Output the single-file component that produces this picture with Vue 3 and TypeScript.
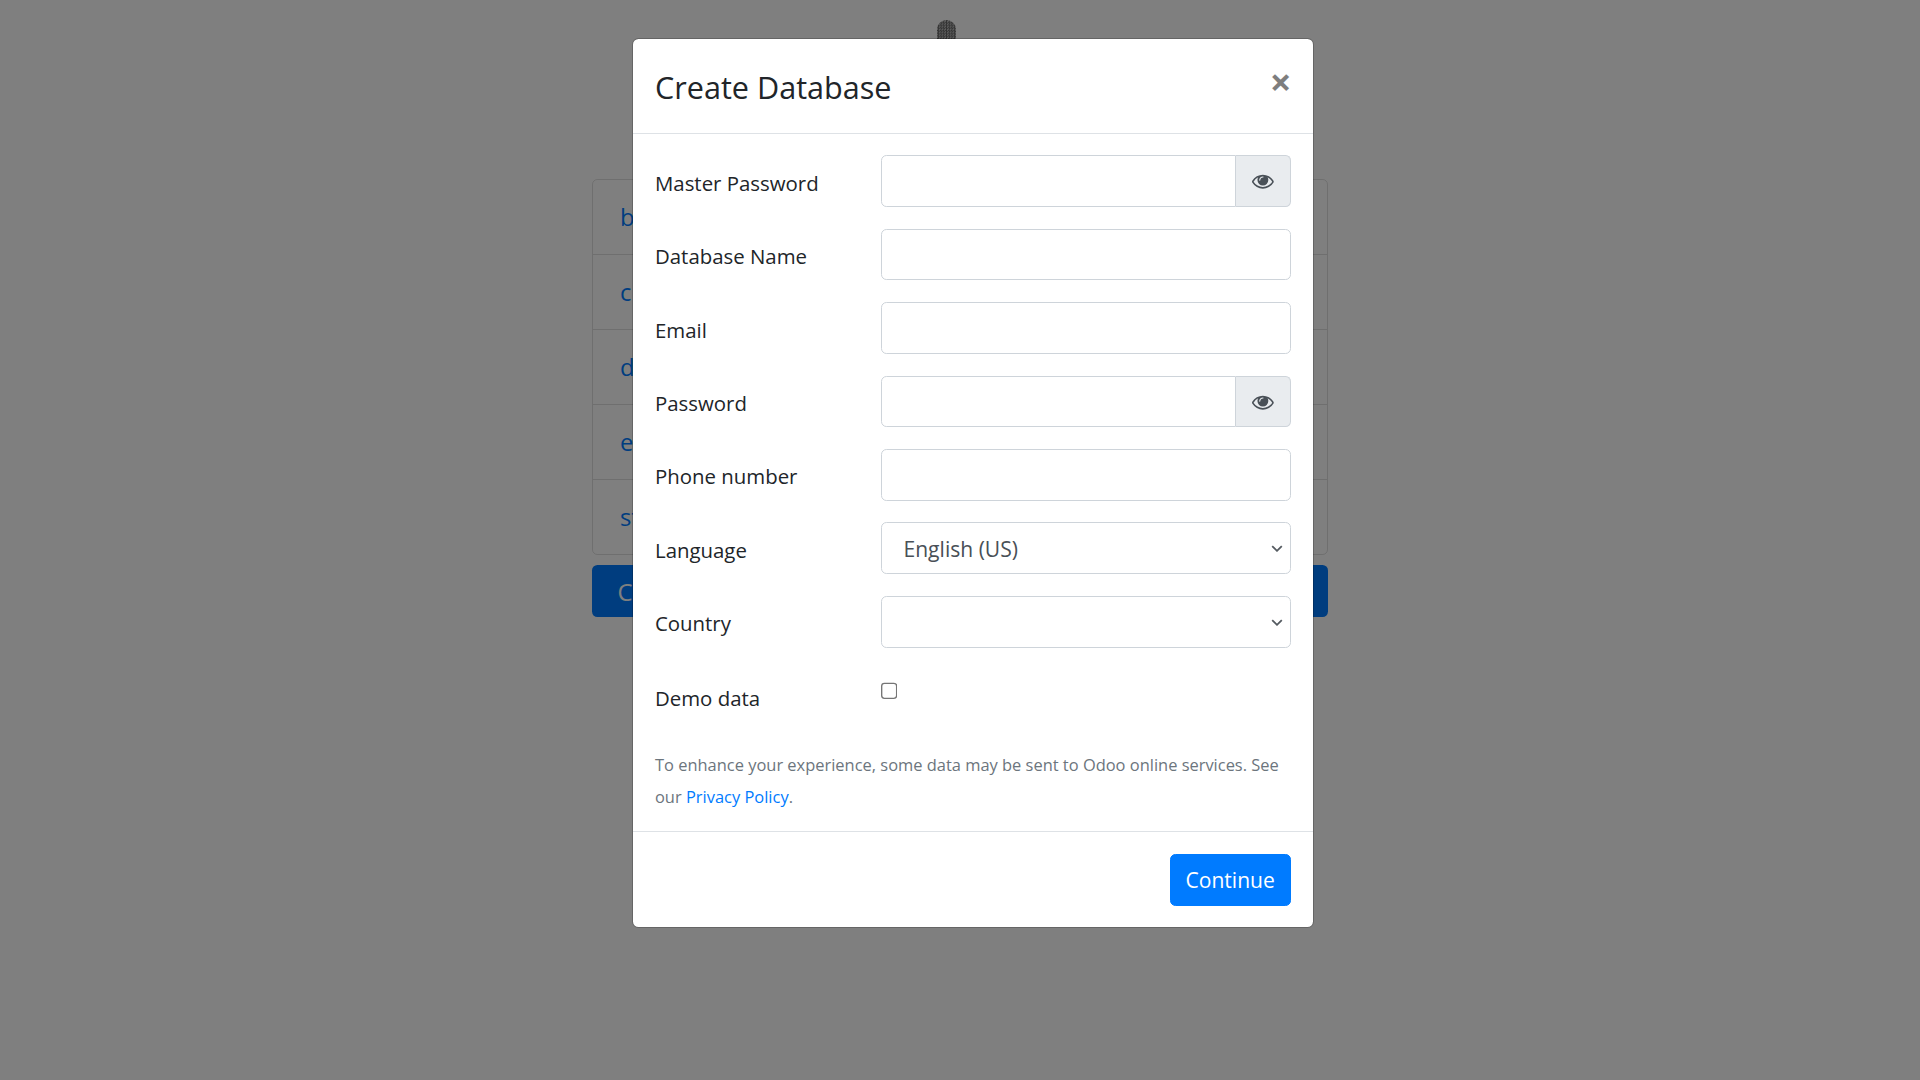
<script setup lang="ts">
const rows: string[] = ['bkp_one', 'crm_demo', 'dev_main', 'erp_test', 'staging'];
const languages: string[] = ['English (US)'];
const eye =
  'M1664 960q-152-236-381-353 61 97 61 225 0 185-131.5 316.5t-316.5 131.5-316.5-131.5-131.5-316.5q0-121 61-225-229 117-381 353 133 205 333.5 326.5t434.5 121.5 434.5-121.5 333.5-326.5zm-720-384q0-20-14-34t-34-14q-125 0-214.5 89.5t-89.5 214.5q0 20 14 34t34 14 34-14 14-34q0-86 61-147t147-61q20 0 34-14t14-34zm848 384q0 34-20 69-140 230-376.5 368.5t-499.5 138.5-499.5-139-376.5-368q-20-35-20-69t20-69q140-229 376.5-368t499.5-139 499.5 139 376.5 368q20 35 20 69z';
</script>

<template>
  <div class="page">
    <div class="behind">
      <div class="logo"></div>
      <ul class="list">
        <li v-for="row in rows" :key="row" class="list-item"><a href="#">{{ row }}</a></li>
      </ul>
      <div class="create-btn">Create Database</div>
    </div>
    <div class="backdrop"></div>
    <div class="modal-wrap">
      <div class="modal">
        <header class="modal-header">
          <h5 class="modal-title">Create Database</h5>
          <button type="button" class="close">×</button>
        </header>
        <div class="modal-body">
          <div class="row">
            <label class="label">Master Password</label>
            <div class="group">
              <input class="control joined" type="password" />
              <span class="addon">
                <svg class="eye" viewBox="0 0 1792 1792"><path :d="eye" fill="currentColor" /></svg>
              </span>
            </div>
          </div>
          <div class="row">
            <label class="label">Database Name</label>
            <input class="control" type="text" />
          </div>
          <div class="row">
            <label class="label">Email</label>
            <input class="control" type="text" />
          </div>
          <div class="row">
            <label class="label">Password</label>
            <div class="group">
              <input class="control joined" type="password" />
              <span class="addon">
                <svg class="eye" viewBox="0 0 1792 1792"><path :d="eye" fill="currentColor" /></svg>
              </span>
            </div>
          </div>
          <div class="row">
            <label class="label">Phone number</label>
            <input class="control" type="text" />
          </div>
          <div class="row">
            <label class="label">Language</label>
            <select class="control select">
              <option v-for="lang in languages" :key="lang">{{ lang }}</option>
            </select>
          </div>
          <div class="row">
            <label class="label">Country</label>
            <select class="control select"><option></option></select>
          </div>
          <div class="row">
            <label class="label demo-label">Demo data</label>
            <div><input class="check" type="checkbox" /></div>
          </div>
          <p class="hint">
            To enhance your experience, some data may be sent to Odoo online services. See our
            <a href="#" class="link">Privacy Policy</a>.
          </p>
        </div>
        <footer class="modal-footer">
          <button type="button" class="continue">Continue</button>
        </footer>
      </div>
    </div>
  </div>
</template>

<style>
html, body { margin: 0; padding: 0; background: #fff; overflow: hidden; }
</style>

<style scoped>
.page {
  zoom: 1.36;
  position: relative;
  height: 794.12px;
  overflow: hidden;
  font-family: "Open Sans", "Noto Sans", sans-serif;
  font-size: 15px;
  line-height: 24px;
  color: #212529;
}
.behind { width: 541.5px; margin: 0 auto; display: flex; flex-direction: column; align-items: stretch; }
.logo {
  align-self: flex-start;
  width: 14px;
  height: 16px;
  margin: 15px 0 0 254px;
  border-radius: 7px 7px 0 0;
  background: repeating-conic-gradient(#666 0 25%, #bbb 0 50%) 0 0 / 2px 2px;
}
.list { list-style: none; margin: 100.5px 0 0; padding: 0; border: 1px solid rgba(0, 0, 0, .125); border-radius: 4px; }
.list-item { padding: 15.5px 20px 8.9px; height: 30px; border-top: 1px solid rgba(0, 0, 0, .125); }
.list-item:first-child { border-top: 0; }
.list-item a { color: #007bff; text-decoration: none; font-size: 17.5px; }
.create-btn { margin-top: 7.5px; height: 38.5px; background: #007bff; color: #fff; border-radius: 4px; padding: 8px 19px; box-sizing: border-box; font-size: 17.5px; }
.backdrop { position: absolute; inset: 0; background: rgba(0, 0, 0, .5); }
.modal-wrap { position: absolute; inset: 0; padding: 28px 0 0 19px; display: flex; justify-content: center; align-items: flex-start; }
.modal { width: 502px; box-sizing: border-box; background: #fff; border: 1px solid rgba(0, 0, 0, .2); border-radius: 4.8px; background-clip: padding-box; }
.modal-header { display: flex; justify-content: space-between; align-items: flex-start; padding: 17.3px 16.5px 15.5px; border-bottom: 1px solid #dee2e6; }
.modal-title { margin: 0; font-size: 22.5px; font-weight: 400; line-height: 36px; }
.close {
  padding: 16.5px 16px 15px; margin: -17.3px -16.5px -16px auto; border: 0; background: transparent;
  font-family: inherit; font-size: 28px; font-weight: 700; line-height: 1; color: #000; opacity: .5;
}
.modal-body { padding: 16px 16.5px 13.4px; }
.row { display: grid; grid-template-columns: 166px 1fr; margin-bottom: 16px; }
.label { padding: 8.3px 0 5.7px; }
.demo-label { padding-top: 9.5px; }
.group { display: flex; }
.control {
  display: block; width: 100%; height: 38px; box-sizing: border-box; padding: 6px 12px;
  font: inherit; font-size: 15.5px; color: #495057; background: #fff; border: 1px solid #ced4da; border-radius: 4px;
}
.select {
  appearance: none;
  padding-left: 16px;
  padding-top: 7px;
  background: #fff url("data:image/svg+xml,%3Csvg xmlns='http://www.w3.org/2000/svg' viewBox='0 0 10 6'%3E%3Cpath d='M1 1l4 4 4-4' fill='none' stroke='%23555b61' stroke-width='1.5'/%3E%3C/svg%3E") no-repeat right 4.6px top 16px / 9px 5.4px;
}
.joined { flex: 1; min-width: 0; border-radius: 4px 0 0 4px; }
.addon {
  display: flex; align-items: center; padding: 6px 12px 6px 11.5px; background: #e9ecef;
  border: 1px solid #ced4da; border-left: 0; border-radius: 0 4px 4px 0; color: #495057;
}
.eye { width: 16px; height: 16px; display: block; }
.check { margin: 9.5px 0 0; display: block; }
.hint { margin: 0; padding-top: 3.2px; color: #6c757d; font-size: 12.1px; line-height: 23.5px; }
.link { color: #007bff; text-decoration: none; }
.modal-footer { display: flex; justify-content: flex-end; padding: 16.3px 16.5px 16px; border-top: 1px solid #dee2e6; }
.continue { font: inherit; font-size: 15.5px; height: 38px; color: #fff; background: #007bff; border: 1px solid #007bff; border-radius: 4px; padding: 6px 11px; }
</style>
